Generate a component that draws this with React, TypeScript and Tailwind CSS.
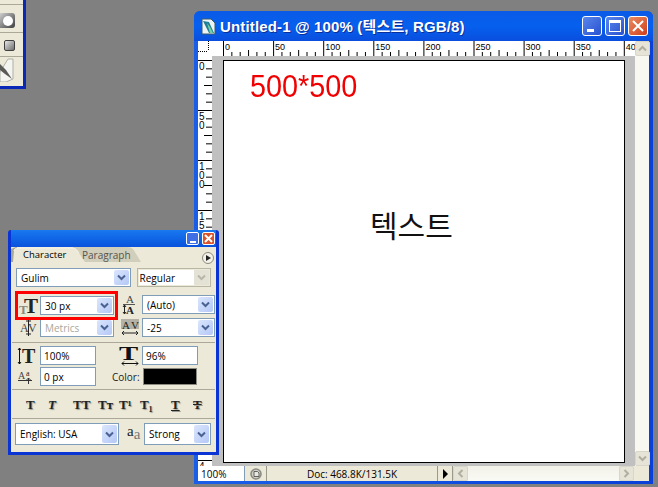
import React from 'react';

const ui = { fontFamily: '"Open Sans", "Liberation Sans", sans-serif' };
const serif = '"Liberation Serif", serif';
const hTicks = Array.from({ length: 49 }, (_, i) => i);
// ruler labels that actually show: the rest sit under the panel or get cut by the edge
const hLabels = ['0', '50', '100', '150', '200', '250', '300', '350', '40'];
const vLabels = [
  { top: 0, digits: '0' },
  { top: 50, digits: '50' },
  { top: 100, digits: '100' },
  { top: 150, digits: '15' },
  { top: 400, digits: '4' },
];

function Chevron({ color = '#4a6292' }: { color?: string }) {
  return (
    <svg width="9" height="7" viewBox="0 0 9 7">
      <path d="M1 1.5 L4.5 5 L8 1.5" fill="none" stroke={color} strokeWidth="2" />
    </svg>
  );
}

function Select({ label, className, disabled }: { label: string; className: string; disabled?: boolean }) {
  return (
    <div className={`flex items-center border border-[#7f9db9] bg-white p-[1px] ${className}`}>
      <span className={`flex-1 pl-[3px] text-[10px] leading-none ${disabled ? 'text-[#a9a89c]' : 'text-black'}`}>{label}</span>
      <div className="flex h-full w-[15px] items-center justify-center rounded-[2px] bg-gradient-to-br from-[#dbe6fd] to-[#b4c8f6]">
        <Chevron />
      </div>
    </div>
  );
}

function Field({ label, className }: { label: string; className: string }) {
  return (
    <div className={`flex h-[19px] items-center border border-[#7f9db9] bg-white pl-[3px] text-[10px] leading-none text-black ${className}`}>
      {label}
    </div>
  );
}

function Divider() {
  return <div className="h-[1px] bg-[#aca899]" />;
}

function SerifT({ children, className }: { children: React.ReactNode; className?: string }) {
  return (
    <span
      className={`font-bold leading-none text-[#222] [text-shadow:1px_1px_1px_#9a9a90] ${className ?? ''}`}
      style={{ fontFamily: serif }}
    >
      {children}
    </span>
  );
}

// small panel glyphs, letters stay svg text
function Glyph({ w, h, children }: { w: number; h: number; children: React.ReactNode }) {
  return (
    <svg width={w} height={h} viewBox={`0 0 ${w} ${h}`} fontFamily={serif} fontWeight="700" className="block shrink-0 overflow-visible">
      {children}
    </svg>
  );
}

function SizeIcon() {
  return (
    <Glyph w={19} h={20}>
      <text x="0" y="18" fontSize="13" fill="#8a8a80">T</text>
      <text x="5" y="17" fontSize="21" fill="#222">T</text>
    </Glyph>
  );
}

function LeadingIcon() {
  return (
    <Glyph w={14} h={21}>
      <text x="4" y="9" fontSize="11" fill="#444" fontWeight="400">A</text>
      <line x1="1" x2="13" y1="10.5" y2="10.5" stroke="#555" />
      <text x="4" y="20" fontSize="11" fill="#222">A</text>
      <path d="M2.5 11 V20 M1 13 L2.5 11 L4 13 M1 18 L2.5 20 L4 18" fill="none" stroke="#222" />
    </Glyph>
  );
}

function KernIcon() {
  return (
    <Glyph w={17} h={19}>
      <text x="0" y="14" fontSize="12" fill="#444" fontWeight="400">A</text>
      <text x="8" y="14" fontSize="12" fill="#444" fontWeight="400">V</text>
      <path d="M8.5 1 V18 M6 3 H11 M6 16 H11" fill="none" stroke="#222" />
    </Glyph>
  );
}

function TrackIcon() {
  return (
    <Glyph w={18} h={17}>
      <rect x="0" y="0" width="18" height="10" fill="#b4b2a6" />
      <text x="1" y="10" fontSize="11" fill="#222" fontWeight="400">A</text>
      <text x="10" y="10" fontSize="11" fill="#222" fontWeight="400">V</text>
      <path d="M1 14 H17 M3 12 L1 14 L3 16 M15 12 L17 14 L15 16" fill="none" stroke="#222" />
    </Glyph>
  );
}

function VScaleIcon() {
  return (
    <Glyph w={18} h={18}>
      <path d="M2.5 1 V17 M1 3 L2.5 1 L4 3 M1 15 L2.5 17 L4 15" fill="none" stroke="#111" />
      <text x="5" y="16" fontSize="20" fill="#222">T</text>
    </Glyph>
  );
}

function HScaleIcon() {
  return (
    <Glyph w={18} h={21}>
      <text x="0" y="15" fontSize="18" fill="#111" transform="translate(-2 0) scale(1.6 1)">T</text>
      <path d="M1 18.5 H17 M3 16.5 L1 18.5 L3 20.5 M15 16.5 L17 18.5 L15 20.5" fill="none" stroke="#111" />
    </Glyph>
  );
}

function BaselineIcon() {
  return (
    <Glyph w={14} h={14}>
      <text x="0" y="9" fontSize="10" fill="#444" fontWeight="400">A</text>
      <text x="8" y="6" fontSize="8" fill="#222" fontWeight="400">a</text>
      <path d="M0 10.5 H14 M10.5 14 V8 M8.5 10 L10.5 8 L12.5 10" fill="none" stroke="#333" />
    </Glyph>
  );
}

function TabStrip() {
  return (
    <div className="relative flex h-[15px] shrink-0 items-end pl-[12px]">
      <svg width="205" height="15" className="absolute inset-0">
        <path d="M60 15 L72 15 L130 15 L122 2 Q120 0 116 0 L62 0 Z" fill="#d2cebc" />
        <path d="M0 15 V2 L5 0 H6 L4 15 Z" fill="#a8a69a" />
        <path d="M2 15 L3 4 Q3 1 8 1 L62 1 Q65 1 68 6 L74 15 Z" fill="#ece9d8" />
        <path d="M3 4 Q3 1 8 1 L62 1 Q65 1 68 6" fill="none" stroke="#f8f6ec" />
      </svg>
      <span className="relative h-[14px] w-[59px] text-[9.5px] leading-[14px] text-black">Character</span>
      <span className="relative h-[14px] w-[48px] text-[10px] leading-[14px] text-[#55544c]">Paragraph</span>
      <div className="relative mb-[-2px] ml-auto mr-[2px] flex h-[12px] w-[12px] items-center justify-center rounded-full border border-[#8c8a7c] bg-[#f4f2e8]">
        <svg width="5" height="6" viewBox="0 0 5 6"><path d="M0 0 L5 3 L0 6 Z" fill="#222" /></svg>
      </div>
    </div>
  );
}

function CharacterPanel() {
  return (
    <div className="absolute left-[8px] top-[230px] z-10 flex h-[225px] w-[211px] flex-col rounded-t-[3px] bg-[#0a35d4] px-[3px] pb-[3px] text-black" style={ui}>
      <div className="flex h-[17px] shrink-0 items-center justify-end gap-[3px] bg-gradient-to-b from-[#1a78f0] to-[#0a52dc] pr-[1px]">
        <div className="flex h-[13px] w-[13px] items-end justify-center rounded-[2px] border border-white bg-[#3f6fe4] pb-[1px]">
          <div className="h-[2px] w-[6px] bg-white" />
        </div>
        <div className="flex h-[13px] w-[13px] items-center justify-center rounded-[2px] border border-white bg-[#d9542c] text-white">
          <svg width="9" height="9" viewBox="0 0 9 9"><path d="M1 1 L8 8 M8 1 L1 8" stroke="white" strokeWidth="2" /></svg>
        </div>
      </div>
      <div className="flex flex-1 flex-col bg-[#ece9d8]">
        <TabStrip />

        <div className="flex flex-col px-[5px]">
          <div className="mt-[6px] flex gap-[6px]">
            <Select label="Gulim" className="h-[19px] w-[117px]" />
            <div className="flex h-[19px] w-[76px] items-center border border-[#b8b6a4] bg-[#ece9d8] p-[1px]">
              <span className="flex h-full flex-1 items-center bg-white pl-[1px] text-[10px] leading-none">Regular</span>
              <div className="flex h-full w-[15px] items-center justify-center bg-[#e4e2d4]"><Chevron color="#b8b6aa" /></div>
            </div>
          </div>

          <div className="mt-[4px] flex h-[47px]">
            <div className="flex w-[105px] shrink-0 flex-col">
              <div className="relative z-10 -ml-[1px] flex h-[29px] w-[103px] items-center border-[3px] border-[#ff0000] pl-[1px]">
                <div className="flex w-[20px] justify-start"><SizeIcon /></div>
                <Select label="30 px" className="ml-[1px] h-[19px] w-[74px]" />
              </div>
              <div className="mt-[-2px] flex h-[19px] items-center">
                <div className="flex w-[24px] justify-center"><KernIcon /></div>
                <Select label="Metrics" disabled className="h-[19px] w-[74px]" />
              </div>
            </div>
            <div className="flex flex-col gap-[4px] pt-[4px]">
              <div className="flex h-[19px] items-center">
                <div className="flex w-[21px] justify-start pl-[1px]"><LeadingIcon /></div>
                <Select label="(Auto)" className="h-[19px] w-[73px]" />
              </div>
              <div className="flex h-[19px] items-center">
                <div className="flex w-[21px] justify-start"><TrackIcon /></div>
                <Select label="-25" className="h-[19px] w-[73px]" />
              </div>
            </div>
          </div>
        </div>

        <div className="mx-[1px] mt-[4px]"><Divider /></div>

        <div className="mt-[3px] flex px-[5px]">
          <div className="flex w-[105px] shrink-0 flex-col gap-[2px]">
            <div className="flex h-[19px] items-center">
              <div className="flex w-[24px] justify-start pl-[1px]"><VScaleIcon /></div>
              <Field label="100%" className="w-[56px]" />
            </div>
            <div className="flex h-[19px] items-center">
              <div className="flex w-[24px] justify-start pl-[2px]"><BaselineIcon /></div>
              <Field label="0 px" className="w-[56px]" />
            </div>
          </div>
          <div className="flex flex-col gap-[2px]">
            <div className="flex h-[19px] items-center">
              <div className="flex w-[21px] justify-start"><HScaleIcon /></div>
              <Field label="96%" className="w-[56px]" />
            </div>
            <div className="ml-[-9px] flex h-[19px] items-center">
              <span className="w-[31px] text-[10px] leading-none text-[#222]">Color:</span>
              <div className="h-[17px] w-[54px] border border-[#8a8a80] bg-black" />
            </div>
          </div>
        </div>

        <div className="mx-[1px] mt-[3px]"><Divider /></div>

        <div className="flex h-[28px] shrink-0 items-center pl-[15px]">
          <SerifT className="w-[22px] text-[13px]">T</SerifT>
          <SerifT className="w-[25px] text-[13px] italic">T</SerifT>
          <SerifT className="w-[25px] text-[13px]">TT</SerifT>
          <SerifT className="w-[21px] text-[13px]">Tт</SerifT>
          <SerifT className="w-[21px] text-[13px]">T¹</SerifT>
          <SerifT className="w-[31px] text-[13px]">T₁</SerifT>
          <SerifT className="w-[22px] text-[13px] underline">T</SerifT>
          <SerifT className="text-[13px] line-through">T</SerifT>
        </div>

        <div className="mx-[1px]"><Divider /></div>

        <div className="mt-[4px] flex items-center pl-[4px]">
          <Select label="English: USA" className="h-[22px] w-[104px]" />
          <div className="ml-[8px] w-[17px] text-[15px] leading-none text-[#222]" style={{ fontFamily: serif }}>
            <span className="relative -top-[3px]">a</span><span className="text-[#777]">a</span>
          </div>
          <Select label="Strong" className="h-[22px] w-[67px]" />
        </div>
      </div>
    </div>
  );
}

function HorizontalRuler() {
  return (
    <svg width="423" height="15" className="block">
      <rect width="423" height="15" fill="white" />
      {hTicks.map(i => {
        const x = 11.5 + (i * 50.1) / 6;
        const major = i % 6 === 0;
        return <line key={i} x1={x} x2={x} y1={major ? 0 : i % 3 === 0 ? 9 : 11} y2={15} stroke="black" />;
      })}
      {hLabels.map((n, i) => (
        <text key={n} x={13 + i * 50.1} y="9" fontSize="9" fill="black" fontFamily='"Liberation Sans", sans-serif'>{n}</text>
      ))}
    </svg>
  );
}

function VerticalRuler() {
  return (
    <svg width="14" height="410" className="block">
      <rect width="14" height="410" fill="white" />
      {Array.from({ length: 49 }, (_, i) => i).map(i => {
        const y = 4.5 + (i * 50) / 6;
        const major = i % 6 === 0;
        return <line key={i} x1={major ? 0 : i % 3 === 0 ? 6 : 8} x2="14" y1={y} y2={y} stroke="black" />;
      })}
      {vLabels.map(l =>
        l.digits.split('').map((d, j) => (
          <text key={`${l.top}${j}`} x="1" y={14 + l.top + j * 9} fontSize="10" fill="black" fontFamily='"Liberation Sans", sans-serif'>{d}</text>
        ))
      )}
    </svg>
  );
}

function ScrollButton({ dir }: { dir: 'up' | 'down' | 'left' | 'right' }) {
  const rot = { up: 180, down: 0, left: 90, right: -90 }[dir];
  return (
    <div className="flex h-[15px] w-[15px] shrink-0 items-center justify-center rounded-[2px] border border-[#d8d6c8] bg-[#e6e4d6]">
      <svg width="9" height="7" viewBox="0 0 9 7" style={{ transform: `rotate(${rot}deg)` }}>
        <path d="M1 1.5 L4.5 5 L8 1.5" fill="none" stroke="#b0ae9e" strokeWidth="2" />
      </svg>
    </div>
  );
}

function DocWindow() {
  return (
    <div className="absolute left-[194px] top-[11px] flex h-[473px] w-[459px] flex-col rounded-t-[6px] bg-gradient-to-r from-[#1a5ee8] to-[#0a40d8] px-[4px] pb-[3px]" style={ui}>
      {/* title bar */}
      <div className="-mx-[4px] flex h-[30px] shrink-0 items-center rounded-t-[6px] bg-gradient-to-b from-[#0a5ae6] via-[#0660ee] to-[#0a4ede] pl-[6px] pr-[5px]">
        <svg width="17" height="17" viewBox="0 0 17 17" className="shrink-0">
          <path d="M2 1 H11 L15 5 V16 H2 Z" fill="#eef4f6" stroke="#3a5a6a" />
          <path d="M3 3 L9 4 L14 15 L9 15 Z" fill="#1f7f96" />
          <path d="M7 5 L10 9 L13 15 L10 15 Z" fill="#7ad0a0" />
        </svg>
        <span
          className="ml-[3px] whitespace-nowrap text-[15px] leading-none tracking-[0.15px] text-white [text-shadow:1px_1px_0_#0a2f9a]"
          style={{ fontFamily: '"Liberation Sans", "Noto Sans CJK KR", sans-serif', fontWeight: 700 }}
        >
          Untitled-1 @ 100% (텍스트, RGB/8)
        </span>
        <div className="ml-auto flex gap-[3px]">
          <div className="flex h-[20px] w-[20px] items-end justify-start rounded-[3px] border border-white bg-gradient-to-br from-[#5a86ec] to-[#2a50d0] pb-[3px] pl-[4px]">
            <div className="h-[3px] w-[7px] bg-white" />
          </div>
          <div className="flex h-[20px] w-[20px] items-center justify-center rounded-[3px] border border-white bg-gradient-to-br from-[#5a86ec] to-[#2a50d0]">
            <div className="h-[12px] w-[12px] border border-t-[3px] border-white" />
          </div>
          <div className="flex h-[20px] w-[20px] items-center justify-center rounded-[3px] border border-white bg-gradient-to-br from-[#e88a60] to-[#d03c18]">
            <svg width="12" height="12" viewBox="0 0 12 12"><path d="M1 1 L11 11 M11 1 L1 11" stroke="white" strokeWidth="2" /></svg>
          </div>
        </div>
      </div>

      {/* document area */}
      <div className="flex min-h-0 flex-1 bg-[#c0c0c0]">
        <div className="flex min-w-0 flex-1 flex-col overflow-hidden">
          <div className="flex h-[15px] shrink-0">
            <div className="h-[15px] w-[14px] shrink-0 bg-white">
              <svg width="14" height="15" className="block"><path d="M10.5 0 V10 M0 10.5 H10" stroke="black" strokeDasharray="1 1" /></svg>
            </div>
            <HorizontalRuler />
          </div>
          <div className="flex min-h-0 flex-1">
            <div className="h-full shrink-0 overflow-hidden"><VerticalRuler /></div>
            <div className="flex-1 pl-[11px] pt-[4px]">
              <div className="relative h-[403px] w-[402px] border border-black bg-white">
                <span
                  className="absolute left-[26px] top-[9px] origin-left scale-x-90 text-[32px] leading-none text-[#f00000]"
                  style={{ fontFamily: '"Liberation Sans", sans-serif' }}
                >
                  500*500
                </span>
                <span
                  className="absolute left-[146px] top-[148px] text-[30px] leading-none text-[#111]"
                  style={{ fontFamily: '"Noto Sans CJK KR", sans-serif' }}
                >
                  텍스트
                </span>
              </div>
            </div>
          </div>
        </div>
        <div className="flex w-[14px] shrink-0 flex-col justify-between bg-[#f8f7f0]">
          <ScrollButton dir="up" />
          <ScrollButton dir="down" />
        </div>
      </div>

      {/* status bar */}
      <div className="flex h-[15px] shrink-0 items-center bg-[#ece9d8] text-[10px] leading-none text-black">
        <div className="flex h-full w-[47px] items-center border-r border-[#7f9db9] bg-white pl-[3px]">100%</div>
        <div className="flex h-full w-[22px] items-center justify-center border-r border-[#9a9a8c]">
          <svg width="12" height="12" viewBox="0 0 12 12">
            <circle cx="6" cy="6" r="5" fill="#d0d0c8" stroke="#8c8c84" strokeWidth="1.6" />
            <path d="M4 3.5 H7.5 L9 5 V8.5 H4 Z" fill="#e8e8e0" stroke="#444" strokeWidth="0.8" />
          </svg>
        </div>
        <div className="flex h-full w-[171px] items-center justify-center border-r border-[#9a9a8c]">Doc: 468.8K/131.5K</div>
        <div className="flex h-full w-[15px] items-center justify-center border-r border-[#9a9a8c]">
          <svg width="7" height="10" viewBox="0 0 7 10"><path d="M1 0 L6 5 L1 10 Z" fill="black" /></svg>
        </div>
        <ScrollButton dir="left" />
        <div className="h-full flex-1 bg-gradient-to-b from-[#f2f1e8] to-[#fafaf5]" />
        <ScrollButton dir="right" />
        <div className="h-full w-[15px] bg-[#ece9d8]" />
      </div>
    </div>
  );
}

function ToolFragment() {
  return (
    <div className="absolute left-0 top-0 flex h-[89px] w-[26px] flex-col items-start border-b-[3px] border-r-[3px] border-[#0a28b8] bg-[#ece9d8]">
      <div className="mt-[4px] h-[1px] w-full bg-[#aca899]" />
      <div className="mt-[8px] flex h-[15px] w-[15px] items-center justify-center rounded-r-[3px] bg-gradient-to-br from-[#d0d0d0] to-[#404040]">
        <div className="h-[10px] w-[10px] rounded-full bg-white" />
      </div>
      <div className="mt-[4px] h-[1px] w-full bg-[#aca899]" />
      <div className="ml-[4px] mt-[7px] h-[11px] w-[11px] rounded-[2px] border border-[#404040] bg-gradient-to-br from-[#e8e8e8] to-[#707070]" />
      <div className="mt-[5px] h-[1px] w-full bg-[#aca899]" />
      <svg width="14" height="24" viewBox="0 0 14 24" className="mt-[1px]">
        <path d="M13 1 V21 L6 24 H0 V14 L8 1 Z" fill="#f4f4f0" stroke="#b0b0a8" />
        <path d="M0 6 L6 12 L12 21 L5 16 L0 12 Z" fill="#5a5a58" />
      </svg>
    </div>
  );
}

export default function App() {
  return (
    <div className="relative h-[487px] w-[658px] overflow-hidden bg-[#808080]">
      <ToolFragment />
      <DocWindow />
      <CharacterPanel />
    </div>
  );
}
